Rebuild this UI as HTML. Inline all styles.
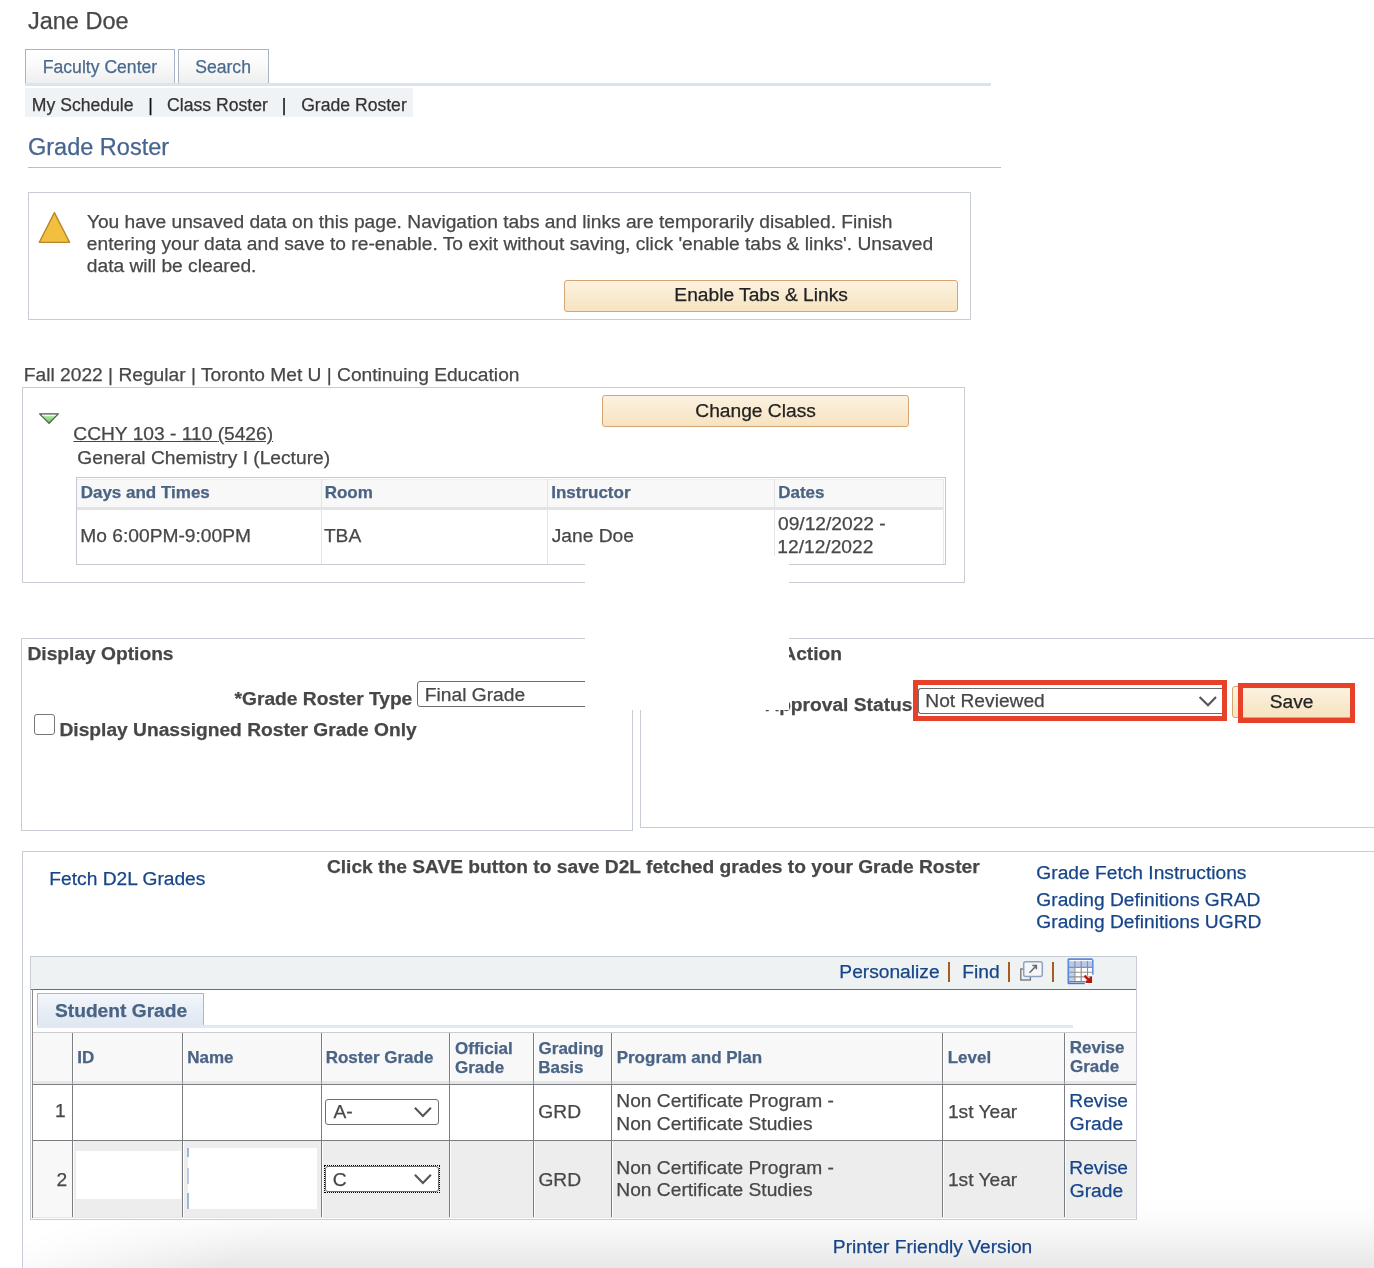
<!DOCTYPE html>
<html><head><meta charset="utf-8"><title>Grade Roster</title>
<style>
html,body{margin:0;padding:0;background:#fff;width:1374px;height:1268px;overflow:hidden;position:relative}
body{font-family:"Liberation Sans", sans-serif}
.t{position:absolute;white-space:nowrap;font-family:"Liberation Sans", sans-serif;-webkit-text-stroke:0.25px currentColor}
.r{position:absolute;box-sizing:border-box}
</style></head><body>
<div id="wrap" style="position:absolute;left:0;top:0;width:1374px;height:1268px;will-change:transform">
<div class="t" id="t0" style="left:27.97px;top:10px;font-size:23.5px;line-height:23.5px;font-weight:400;color:#474747;">Jane Doe</div>
<div class="r" style="left:25px;top:49px;width:150px;height:34px;border:1px solid #a6b3c6;border-bottom:none;background:linear-gradient(#ffffff 0%,#fbfbfb 40%,#efefef 100%)"></div>
<div class="r" style="left:178px;top:49px;width:91px;height:34px;border:1px solid #a6b3c6;border-bottom:none;background:linear-gradient(#ffffff 0%,#fbfbfb 40%,#efefef 100%)"></div>
<div class="t" id="t1" style="left:42.79px;top:59px;font-size:17.6px;line-height:17.6px;font-weight:400;color:#4b6a8e;">Faculty Center</div>
<div class="t" id="t2" style="left:195.21px;top:59px;font-size:17.6px;line-height:17.6px;font-weight:400;color:#4b6a8e;">Search</div>
<div class="r" style="left:25px;top:83px;width:966px;height:3px;background:#dae3f0"></div>
<div class="r" style="left:25px;top:88px;width:388px;height:29px;background:#eff3f5"></div>
<div class="t" id="t3" style="left:31.87px;top:97px;font-size:17.6px;line-height:17.6px;font-weight:400;color:#333;">My Schedule</div>
<div class="t" id="t4" style="left:148.14px;top:97px;font-size:17.6px;line-height:17.6px;font-weight:400;color:#111;">|</div>
<div class="t" id="t5" style="left:167.12px;top:97px;font-size:17.6px;line-height:17.6px;font-weight:400;color:#333;">Class Roster</div>
<div class="t" id="t6" style="left:281.74px;top:97px;font-size:17.6px;line-height:17.6px;font-weight:400;color:#111;">|</div>
<div class="t" id="t7" style="left:301.16px;top:97px;font-size:17.6px;line-height:17.6px;font-weight:400;color:#333;">Grade Roster</div>
<div class="t" id="t8" style="left:28.00px;top:136px;font-size:23.5px;line-height:23.5px;font-weight:400;color:#45658f;">Grade Roster</div>
<div class="r" style="left:28px;top:167px;width:973px;height:1px;background:#bdbdbd"></div>
<div class="r" style="left:28px;top:192px;width:943px;height:128px;border:1px solid #c8ccd4;"></div>
<svg class="r" style="left:36px;top:209px" width="38" height="37" viewBox="0 0 38 37"><path d="M18.4 3.6 L33.6 33.4 L3.3 33.4 Z" fill="#f3bf3e" stroke="#b8862a" stroke-width="1.35" stroke-linejoin="round"/></svg>
<div class="t" id="t9" style="left:86.88px;top:212px;font-size:19.2px;line-height:19.2px;font-weight:400;color:#474747;">You have unsaved data on this page. Navigation tabs and links are temporarily disabled. Finish</div>
<div class="t" id="t10" style="left:86.80px;top:234px;font-size:19.2px;line-height:19.2px;font-weight:400;color:#474747;">entering your data and save to re-enable. To exit without saving, click 'enable tabs &amp; links'. Unsaved</div>
<div class="t" id="t11" style="left:86.80px;top:256px;font-size:19.2px;line-height:19.2px;font-weight:400;color:#474747;">data will be cleared.</div>
<div class="r" style="left:564px;top:280px;width:394px;height:32px;border:1px solid #d6a574;border-radius:3px;background:linear-gradient(#fcf2e0,#f6e3c1)"></div>
<div class="t" id="t12" style="left:674.36px;top:285px;font-size:19.2px;line-height:19.2px;font-weight:400;color:#222;">Enable Tabs &amp; Links</div>
<div class="t" id="t13" style="left:23.85px;top:365px;font-size:19.2px;line-height:19.2px;font-weight:400;color:#474747;">Fall 2022 | Regular | Toronto Met U | Continuing Education</div>
<div class="r" style="left:22px;top:387px;width:943px;height:196px;border:1px solid #c8ccd4;"></div>
<svg class="r" style="left:37px;top:410px" width="24" height="16" viewBox="0 0 24 16"><defs><linearGradient id="tg" x1="0" y1="0" x2="0" y2="1"><stop offset="0" stop-color="#e9fbe4"/><stop offset="0.3" stop-color="#a6e49a"/><stop offset="1" stop-color="#6cc25c"/></linearGradient></defs><path d="M2.6 3.9 L21.3 3.9 L12.1 13.4 Z" fill="url(#tg)" stroke="#4f5550" stroke-width="1.15" stroke-linejoin="round"/><path d="M5.4 5.4 H18.4" stroke="#f2fcef" stroke-width="1"/></svg>
<div class="t" id="t14" style="left:73.30px;top:424px;font-size:19.2px;line-height:19.2px;font-weight:400;color:#474747;"><span style="text-decoration:underline">CCHY 103 - 110 </span><span style="text-decoration:underline">(5426)</span></div>
<div class="t" id="t15" style="left:77.36px;top:448px;font-size:19.2px;line-height:19.2px;font-weight:400;color:#474747;">General Chemistry I (Lecture)</div>
<div class="r" style="left:602px;top:395px;width:307px;height:32px;border:1px solid #d6a574;border-radius:3px;background:linear-gradient(#fcf2e0,#f6e3c1)"></div>
<div class="t" id="t16" style="left:695.33px;top:401px;font-size:19.2px;line-height:19.2px;font-weight:400;color:#222;">Change Class</div>
<div class="r" style="left:76px;top:477px;width:870px;height:88px;border:1px solid #c5c9d2;background:#fff"></div>
<div class="r" style="left:77px;top:479px;width:867px;height:28px;background:#f8f8f8;border-top:1px solid #ececec"></div>
<div class="r" style="left:77px;top:507px;width:867px;height:3px;background:#e3e3e3"></div>
<div class="r" style="left:321px;top:479px;width:1px;height:85px;background:#e4e4e4"></div>
<div class="r" style="left:547px;top:479px;width:1px;height:85px;background:#e4e4e4"></div>
<div class="r" style="left:774px;top:479px;width:1px;height:85px;background:#e4e4e4"></div>
<div class="r" style="left:943px;top:479px;width:1px;height:85px;background:#e8e8e8"></div>
<div class="t" id="t17" style="left:80.67px;top:484px;font-size:17px;line-height:17px;font-weight:700;color:#4a6485;">Days and Times</div>
<div class="t" id="t18" style="left:324.67px;top:484px;font-size:17px;line-height:17px;font-weight:700;color:#4a6485;">Room</div>
<div class="t" id="t19" style="left:551.19px;top:484px;font-size:17px;line-height:17px;font-weight:700;color:#4a6485;">Instructor</div>
<div class="t" id="t20" style="left:778.19px;top:484px;font-size:17px;line-height:17px;font-weight:700;color:#4a6485;">Dates</div>
<div class="t" id="t21" style="left:80.34px;top:526px;font-size:19.2px;line-height:19.2px;font-weight:400;color:#474747;">Mo 6:00PM-9:00PM</div>
<div class="t" id="t22" style="left:323.88px;top:526px;font-size:19.2px;line-height:19.2px;font-weight:400;color:#474747;">TBA</div>
<div class="t" id="t23" style="left:551.72px;top:526px;font-size:19.2px;line-height:19.2px;font-weight:400;color:#474747;">Jane Doe</div>
<div class="t" id="t24" style="left:778.00px;top:514px;font-size:19.2px;line-height:19.2px;font-weight:400;color:#474747;">09/12/2022 -</div>
<div class="t" id="t25" style="left:777.34px;top:537px;font-size:19.2px;line-height:19.2px;font-weight:400;color:#474747;">12/12/2022</div>
<div class="r" style="left:21px;top:638px;width:612px;height:193px;border:1px solid #c8ccd4;"></div>
<div class="t" id="t26" style="left:27.47px;top:644px;font-size:19.2px;line-height:19.2px;font-weight:700;color:#474747;">Display Options</div>
<div class="t" id="t27" style="left:234.58px;top:689px;font-size:19.2px;line-height:19.2px;font-weight:700;color:#474747;">*Grade Roster Type</div>
<div class="r" style="left:417px;top:681px;width:240px;height:26px;border:1px solid #6e6e6e;border-radius:3px;background:#fff"></div>
<div class="t" id="t28" style="left:424.85px;top:685px;font-size:19.2px;line-height:19.2px;font-weight:400;color:#474747;">Final Grade</div>
<div class="r" style="left:34px;top:714px;width:21px;height:21px;border:1.3px solid #777;border-radius:3px;background:#fff"></div>
<div class="t" id="t29" style="left:59.47px;top:720px;font-size:19.2px;line-height:19.2px;font-weight:700;color:#474747;">Display Unassigned Roster Grade Only</div>
<div class="r" style="left:640px;top:638px;width:760px;height:190px;border:1px solid #c8ccd4;"></div>
<div class="t" id="t30" style="left:782.30px;top:644px;font-size:19.2px;line-height:19.2px;font-weight:700;color:#474747;">Action</div>
<div class="t" id="t31" style="left:765.30px;top:695px;font-size:19.2px;line-height:19.2px;font-weight:700;color:#474747;">Approval Status</div>
<div class="r" style="left:918px;top:688px;width:305px;height:26px;border-top:1px solid #6b6b6b;border-bottom:1px solid #6b6b6b;border-left:1px solid #6b6b6b;border-radius:3px 0 0 3px;background:#fff"></div>
<div class="t" id="t32" style="left:925.34px;top:691px;font-size:19.2px;line-height:19.2px;font-weight:400;color:#474747;">Not Reviewed</div>
<svg class="r" style="left:1196px;top:693px" width="24" height="16" viewBox="0 0 24 16"><path d="M3.6 4.1 L12 12.3 L20 4.1" fill="none" stroke="#555" stroke-width="2.1"/></svg>
<div class="r" style="left:913px;top:680px;width:314px;height:41px;border:5px solid #e8412a"></div>
<div class="r" style="left:1232px;top:686px;width:120px;height:32px;border:1px solid #d6a574;border-radius:3px;background:linear-gradient(#fcf2e0,#f6e3c1)"></div>
<div class="r" style="left:1238px;top:683px;width:117px;height:40px;border:5px solid #e8412a"></div>
<div class="t" id="t33" style="left:1269.79px;top:692px;font-size:19.2px;line-height:19.2px;font-weight:400;color:#222;">Save</div>
<div class="r" style="left:585px;top:556px;width:204px;height:154px;background:#fff"></div>
<div class="r" style="left:22px;top:851px;width:1400px;height:500px;border:1px solid #c8ccd4;"></div>
<div class="r" style="left:23px;top:1195px;width:1351px;height:73px;background:linear-gradient(rgba(0,0,0,0) 0%,rgba(0,0,0,0.012) 30%,rgba(0,0,0,0.04) 55%,rgba(0,0,0,0.09) 100%);-webkit-mask-image:linear-gradient(150deg,transparent 0px,transparent 40px,#000 160px);mask-image:linear-gradient(150deg,transparent 0px,transparent 40px,#000 160px)"></div>
<div class="t" id="t34" style="left:49.34px;top:869px;font-size:19.2px;line-height:19.2px;font-weight:400;color:#174589;">Fetch D2L Grades</div>
<div class="t" id="t35" style="left:326.90px;top:857px;font-size:19.2px;line-height:19.2px;font-weight:700;color:#474747;">Click the SAVE button to save D2L fetched grades to your Grade Roster</div>
<div class="t" id="t36" style="left:1036.36px;top:863px;font-size:19.2px;line-height:19.2px;font-weight:400;color:#174589;">Grade Fetch Instructions</div>
<div class="t" id="t37" style="left:1036.36px;top:890px;font-size:19.2px;line-height:19.2px;font-weight:400;color:#174589;">Grading Definitions GRAD</div>
<div class="t" id="t38" style="left:1036.36px;top:912px;font-size:19.2px;line-height:19.2px;font-weight:400;color:#174589;">Grading Definitions UGRD</div>
<div class="r" style="left:30px;top:956px;width:1107px;height:264px;border:1px solid #c8ccd4;background:#eff2f3"></div>
<div class="t" id="t39" style="left:839.34px;top:962px;font-size:19.2px;line-height:19.2px;font-weight:400;color:#174589;">Personalize</div>
<div class="r" style="left:948px;top:962px;width:2px;height:20px;background:#a85b1e"></div>
<div class="t" id="t40" style="left:962.34px;top:962px;font-size:19.2px;line-height:19.2px;font-weight:400;color:#174589;">Find</div>
<div class="r" style="left:1008px;top:962px;width:2px;height:20px;background:#a85b1e"></div>
<svg class="r" style="left:1019px;top:960px" width="26" height="22" viewBox="0 0 26 22"><rect x="1.8" y="9" width="9.6" height="11" fill="none" stroke="#7a7a7a" stroke-width="1.4"/><rect x="4.7" y="1.7" width="18.6" height="14.8" rx="2" fill="#f4f6f8" stroke="#8ea2c2" stroke-width="1.5"/><path d="M10.5 12.8 L17 6 M13.4 5.4 H17.4 V9.2" fill="none" stroke="#666" stroke-width="1.5"/></svg>
<div class="r" style="left:1052px;top:962px;width:2px;height:20px;background:#a85b1e"></div>
<svg class="r" style="left:1067px;top:958px" width="28" height="28" viewBox="0 0 28 28"><rect x="1.5" y="1.5" width="24" height="23.5" fill="#fff"/><rect x="2" y="3.6" width="23.5" height="5.4" fill="#b3c9f1"/><rect x="2" y="9" width="5.4" height="15" fill="#bcd0f4"/><path d="M2 3.3 H25" stroke="#cfcfcf" stroke-width="1"/><path d="M7.9 3 V24 M14.2 3 V24 M20.5 3 V24 M2 9.4 H25.5 M2 14.2 H25.5 M2 18.8 H25.5" stroke="#909090" stroke-width="1.15"/><path d="M2 23.6 H18" stroke="#7d7d7d" stroke-width="1.2"/><path d="M1.3 1 V25.6 M1 1.2 H25.5" stroke="#5f89d9" stroke-width="1.7"/><path d="M25.8 1.5 V16.8" stroke="#5f89d9" stroke-width="1.5"/><path d="M1 25.4 H17.8" stroke="#4a74c6" stroke-width="1.6"/><path d="M17.4 17.6 L23.2 23.2 M18.2 23.9 H24 V18.2" fill="none" stroke="#fff" stroke-width="4.2" stroke-opacity="0.75"/><path d="M17.4 17.6 L23 23 M18.6 23.7 H23.8 V18.5" fill="none" stroke="#b2190f" stroke-width="2.6"/></svg>
<div class="r" style="left:31px;top:989px;width:1105px;height:230px;background:#fff;border-top:1px solid #6e6e6e;"></div>
<div class="r" style="left:32px;top:989px;width:1px;height:229px;background:#8a8a8a"></div>
<div class="r" style="left:37px;top:993px;width:167px;height:32px;border:1px solid #a9b7cb;border-bottom:none;background:linear-gradient(#f3f6fb,#dfe7f2)"></div>
<div class="r" style="left:37px;top:1025px;width:1036px;height:3px;background:#dfe8f3"></div>
<div class="t" id="t41" style="left:54.98px;top:1001px;font-size:19.2px;line-height:19.2px;font-weight:700;color:#4a6485;">Student Grade</div>
<div class="r" style="left:33px;top:1032px;width:1103px;height:49px;background:#f8f8f8;border-top:1px solid #c9ccd2"></div>
<div class="r" style="left:33px;top:1085px;width:1103px;height:55px;background:#fff"></div>
<div class="r" style="left:33px;top:1141px;width:1103px;height:76px;background:#ededed"></div>
<div class="r" style="left:33px;top:1141px;width:39px;height:76px;background:#f8f8f8"></div>
<div class="r" style="left:72px;top:1033px;width:1px;height:184px;background:#7b7d82"></div>
<div class="r" style="left:73px;top:1033px;width:1px;height:184px;background:rgba(255,255,255,0.9)"></div>
<div class="r" style="left:182px;top:1033px;width:1px;height:184px;background:#7b7d82"></div>
<div class="r" style="left:183px;top:1033px;width:1px;height:184px;background:rgba(255,255,255,0.9)"></div>
<div class="r" style="left:321px;top:1033px;width:1px;height:184px;background:#7b7d82"></div>
<div class="r" style="left:322px;top:1033px;width:1px;height:184px;background:rgba(255,255,255,0.9)"></div>
<div class="r" style="left:449px;top:1033px;width:1px;height:184px;background:#7b7d82"></div>
<div class="r" style="left:450px;top:1033px;width:1px;height:184px;background:rgba(255,255,255,0.9)"></div>
<div class="r" style="left:533px;top:1033px;width:1px;height:184px;background:#7b7d82"></div>
<div class="r" style="left:534px;top:1033px;width:1px;height:184px;background:rgba(255,255,255,0.9)"></div>
<div class="r" style="left:611px;top:1033px;width:1px;height:184px;background:#7b7d82"></div>
<div class="r" style="left:612px;top:1033px;width:1px;height:184px;background:rgba(255,255,255,0.9)"></div>
<div class="r" style="left:942px;top:1033px;width:1px;height:184px;background:#7b7d82"></div>
<div class="r" style="left:943px;top:1033px;width:1px;height:184px;background:rgba(255,255,255,0.9)"></div>
<div class="r" style="left:1064px;top:1033px;width:1px;height:184px;background:#7b7d82"></div>
<div class="r" style="left:1065px;top:1033px;width:1px;height:184px;background:rgba(255,255,255,0.9)"></div>
<div class="r" style="left:33px;top:1081px;width:1103px;height:3px;background:rgba(200,200,200,0.45)"></div>
<div class="r" style="left:33px;top:1084px;width:1103px;height:1px;background:#7b7d82"></div>
<div class="r" style="left:33px;top:1140px;width:1103px;height:1px;background:#7b7d82"></div>
<div class="r" style="left:33px;top:1217px;width:1103px;height:1px;background:rgba(190,190,190,0.4)"></div>
<div class="t" id="t42" style="left:77.19px;top:1049px;font-size:17px;line-height:17px;font-weight:700;color:#4a6485;">ID</div>
<div class="t" id="t43" style="left:187.19px;top:1049px;font-size:17px;line-height:17px;font-weight:700;color:#4a6485;">Name</div>
<div class="t" id="t44" style="left:325.67px;top:1049px;font-size:17px;line-height:17px;font-weight:700;color:#4a6485;">Roster Grade</div>
<div class="t" id="t45" style="left:455.00px;top:1040px;font-size:17px;line-height:17px;font-weight:700;color:#4a6485;">Official</div>
<div class="t" id="t46" style="left:455.02px;top:1059px;font-size:17px;line-height:17px;font-weight:700;color:#4a6485;">Grade</div>
<div class="t" id="t47" style="left:538.55px;top:1040px;font-size:17px;line-height:17px;font-weight:700;color:#4a6485;">Grading</div>
<div class="t" id="t48" style="left:538.19px;top:1059px;font-size:17px;line-height:17px;font-weight:700;color:#4a6485;">Basis</div>
<div class="t" id="t49" style="left:616.67px;top:1049px;font-size:17px;line-height:17px;font-weight:700;color:#4a6485;">Program and Plan</div>
<div class="t" id="t50" style="left:947.67px;top:1049px;font-size:17px;line-height:17px;font-weight:700;color:#4a6485;">Level</div>
<div class="t" id="t51" style="left:1069.67px;top:1039px;font-size:17px;line-height:17px;font-weight:700;color:#4a6485;">Revise</div>
<div class="t" id="t52" style="left:1070.02px;top:1058px;font-size:17px;line-height:17px;font-weight:700;color:#4a6485;">Grade</div>
<div class="t" id="t53" style="left:54.88px;top:1101px;font-size:19.2px;line-height:19.2px;font-weight:400;color:#474747;">1</div>
<div class="r" style="left:325px;top:1099px;width:114px;height:26px;border:1px solid #6e6e6e;border-radius:3px;background:#fff"></div>
<div class="t" id="t54" style="left:333.49px;top:1102px;font-size:19.2px;line-height:19.2px;font-weight:400;color:#474747;">A-</div>
<svg class="r" style="left:412px;top:1104px" width="22" height="16" viewBox="0 0 22 16"><path d="M2.9 3.8 L10.9 12 L18.9 3.8" fill="none" stroke="#555" stroke-width="2.1"/></svg>
<div class="t" id="t55" style="left:538.36px;top:1102px;font-size:19.2px;line-height:19.2px;font-weight:400;color:#474747;">GRD</div>
<div class="t" id="t56" style="left:616.34px;top:1091px;font-size:19.2px;line-height:19.2px;font-weight:400;color:#474747;">Non Certificate Program -</div>
<div class="t" id="t57" style="left:616.34px;top:1114px;font-size:19.2px;line-height:19.2px;font-weight:400;color:#474747;">Non Certificate Studies</div>
<div class="t" id="t58" style="left:947.88px;top:1102px;font-size:19.2px;line-height:19.2px;font-weight:400;color:#474747;">1st Year</div>
<div class="t" id="t59" style="left:1069.34px;top:1091px;font-size:19.2px;line-height:19.2px;font-weight:400;color:#174589;">Revise</div>
<div class="t" id="t60" style="left:1069.80px;top:1114px;font-size:19.2px;line-height:19.2px;font-weight:400;color:#174589;">Grade</div>
<div class="t" id="t61" style="left:56.42px;top:1170px;font-size:19.2px;line-height:19.2px;font-weight:400;color:#474747;">2</div>
<div class="r" style="left:76px;top:1151px;width:105px;height:48px;background:#fff"></div>
<div class="r" style="left:188px;top:1148px;width:129px;height:61px;background:#fff"></div>
<div class="r" style="left:187px;top:1148px;width:2px;height:9px;background:#9fb5da"></div>
<div class="r" style="left:187px;top:1168px;width:2px;height:16px;background:#b9c9e6"></div>
<div class="r" style="left:187px;top:1193px;width:2px;height:16px;background:#9fb5da"></div>
<div class="r" style="left:325px;top:1166px;width:114px;height:26px;border:1px solid #6e6e6e;border-radius:3px;background:#fff"></div>
<div class="r" style="left:324px;top:1165px;width:116px;height:28px;outline:1px dotted #000;outline-offset:-1px"></div>
<div class="t" id="t62" style="left:332.80px;top:1170px;font-size:19.2px;line-height:19.2px;font-weight:400;color:#474747;">C</div>
<svg class="r" style="left:412px;top:1171px" width="22" height="16" viewBox="0 0 22 16"><path d="M2.9 3.8 L10.9 12 L18.9 3.8" fill="none" stroke="#555" stroke-width="2.1"/></svg>
<div class="t" id="t63" style="left:538.39px;top:1170px;font-size:19.2px;line-height:19.2px;font-weight:400;color:#474747;">GRD</div>
<div class="t" id="t64" style="left:616.34px;top:1158px;font-size:19.2px;line-height:19.2px;font-weight:400;color:#474747;">Non Certificate Program -</div>
<div class="t" id="t65" style="left:616.34px;top:1180px;font-size:19.2px;line-height:19.2px;font-weight:400;color:#474747;">Non Certificate Studies</div>
<div class="t" id="t66" style="left:947.88px;top:1170px;font-size:19.2px;line-height:19.2px;font-weight:400;color:#474747;">1st Year</div>
<div class="t" id="t67" style="left:1069.34px;top:1158px;font-size:19.2px;line-height:19.2px;font-weight:400;color:#174589;">Revise</div>
<div class="t" id="t68" style="left:1069.80px;top:1181px;font-size:19.2px;line-height:19.2px;font-weight:400;color:#174589;">Grade</div>
<div class="t" id="t69" style="left:832.85px;top:1237px;font-size:19.2px;line-height:19.2px;font-weight:400;color:#174589;">Printer Friendly Version</div>
</div>
</body></html>
